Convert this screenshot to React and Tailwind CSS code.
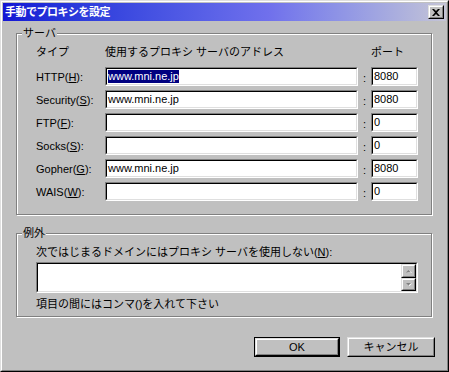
import React from "react";

// くぼんだ入力枠 (Win9x 風)
function Field({ className = "", children }) {
    return (
        <div
            className={`border border-t-[#808080] border-l-[#808080] border-b-white border-r-white ${className}`}
        >
            <div className="h-full border border-t-black border-l-black border-b-[#dfdfdf] border-r-[#dfdfdf] bg-white">
                {children}
            </div>
        </div>
    );
}

function Raised({ className = "", children }) {
    return (
        <div
            className={`border border-t-[#dfdfdf] border-l-[#dfdfdf] border-b-black border-r-black bg-[#c0c0c0] ${className}`}
        >
            <div className="flex h-full w-full items-center justify-center border border-t-white border-l-white border-b-[#808080] border-r-[#808080]">
                {children}
            </div>
        </div>
    );
}

function GroupBox({ title, className = "", children }) {
    return (
        <div
            className={`relative border border-[#808080] shadow-[inset_1px_1px_0_#ffffff,1px_1px_0_#ffffff] ${className}`}
        >
            <span className="absolute -top-[8px] left-[5px] bg-[#c0c0c0] px-[1px] leading-[14px]">
                {title}
            </span>
            {children}
        </div>
    );
}

const rows = [
    { pre: "HTTP(", key: "H", host: "www.mni.ne.jp", port: "8080", selected: true },
    { pre: "Security(", key: "S", host: "www.mni.ne.jp", port: "8080" },
    { pre: "FTP(", key: "F", host: "", port: "0" },
    { pre: "Socks(", key: "S", host: "", port: "0" },
    { pre: "Gopher(", key: "G", host: "www.mni.ne.jp", port: "8080" },
    { pre: "WAIS(", key: "W", host: "", port: "0" },
];

function ProxyRow({ row }) {
    return (
        <div className="flex h-[19px] items-center">
            <div className="w-[69px] leading-[14px]">
                {row.pre}
                <u>{row.key}</u>):
            </div>
            <Field className="h-[19px] w-[253px]">
                <div className="flex h-full items-center pl-[1px] leading-[13px]">
                    {row.host &&
                        (row.selected ? (
                            <span className="bg-[#000080] text-white">{row.host}</span>
                        ) : (
                            <span>{row.host}</span>
                        ))}
                </div>
            </Field>
            <div className="w-[13px] pt-[3px] text-center leading-[14px]">:</div>
            <Field className="h-[19px] w-[47px]">
                <div className="flex h-full items-center pl-[1px] leading-[13px]">
                    {row.port}
                </div>
            </Field>
        </div>
    );
}

function Arrow({ up }) {
    return (
        <svg width="7" height="5" viewBox="0 0 7 5">
            {up ? (
                <>
                    <path d="M2 4h5L4.5 1.5z" fill="#ffffff" />
                    <path d="M1 3.5h5L3.5 1z" fill="#808080" />
                </>
            ) : (
                <>
                    <path d="M2 1.5h5L4.5 4z" fill="#ffffff" />
                    <path d="M1 1h5L3.5 3.5z" fill="#808080" />
                </>
            )}
        </svg>
    );
}

export default function App() {
    return (
        <div className="h-[372px] w-[449px] border border-t-[#dfdfdf] border-l-[#dfdfdf] border-b-black border-r-black bg-[#c0c0c0] text-[11px] text-black [font-family:'Liberation_Sans','Noto_Sans_CJK_JP',sans-serif]">
            <div className="flex h-full flex-col border border-t-white border-l-white border-b-[#808080] border-r-[#808080] p-[1px]">
                {/* タイトルバー */}
                <div className="flex h-[18px] items-center justify-between bg-gradient-to-r from-[#1414d4] via-[#7070ec] via-60% to-[#c4c4d6] pl-[2px] pr-[2px]">
                    <span className="font-bold tracking-[-0.5px] text-white leading-[14px]">
                        手動でプロキシを設定
                    </span>
                    <Raised className="h-[14px] w-[16px]">
                        <svg width="8" height="7" viewBox="0 0 8 7">
                            <path
                                d="M0 0h2l2 2 2-2h2L5 3.5 8 7H6L4 5 2 7H0l3-3.5z"
                                fill="#000"
                            />
                        </svg>
                    </Raised>
                </div>

                {/* サーバ */}
                <GroupBox title="サーバ" className="ml-[13px] mt-[12px] h-[182px] w-[416px]">
                    <div className="pl-[19px] pt-[11px]">
                        <div className="flex leading-[14px]">
                            <div className="w-[69px]">タイプ</div>
                            <div className="w-[266px]">使用するプロキシ サーバのアドレス</div>
                            <div>ポート</div>
                        </div>
                        <div className="mt-[8px] flex flex-col gap-[4px]">
                            {rows.map((row, i) => (
                                <ProxyRow key={i} row={row} />
                            ))}
                        </div>
                    </div>
                </GroupBox>

                {/* 例外 */}
                <GroupBox title="例外" className="ml-[13px] mt-[18px] h-[84px] w-[416px]">
                    <div className="pl-[19px] pt-[11px] leading-[14px]">
                        <div>
                            次ではじまるドメインにはプロキシ サーバを使用しない(<u>N</u>):
                        </div>
                        <Field className="mt-[3px] h-[31px] w-[382px]">
                            <div className="flex h-full justify-end">
                                <div className="flex w-[15px] flex-col">
                                    <Raised className="h-[14px] w-[15px]">
                                        <Arrow up />
                                    </Raised>
                                    <Raised className="h-[13px] w-[15px]">
                                        <Arrow />
                                    </Raised>
                                </div>
                            </div>
                        </Field>
                        <div className="mt-[4px]">項目の間にはコンマ()を入れて下さい</div>
                    </div>
                </GroupBox>

                {/* ボタン */}
                <div className="mt-[20px] flex justify-end gap-[7px] pr-[11px]">
                    <div className="h-[20px] w-[86px] border border-black">
                        <Raised className="h-full w-full">
                            <span className="leading-[14px]">OK</span>
                        </Raised>
                    </div>
                    <Raised className="h-[20px] w-[88px]">
                        <span className="leading-[14px]">キャンセル</span>
                    </Raised>
                </div>
            </div>
        </div>
    );
}
